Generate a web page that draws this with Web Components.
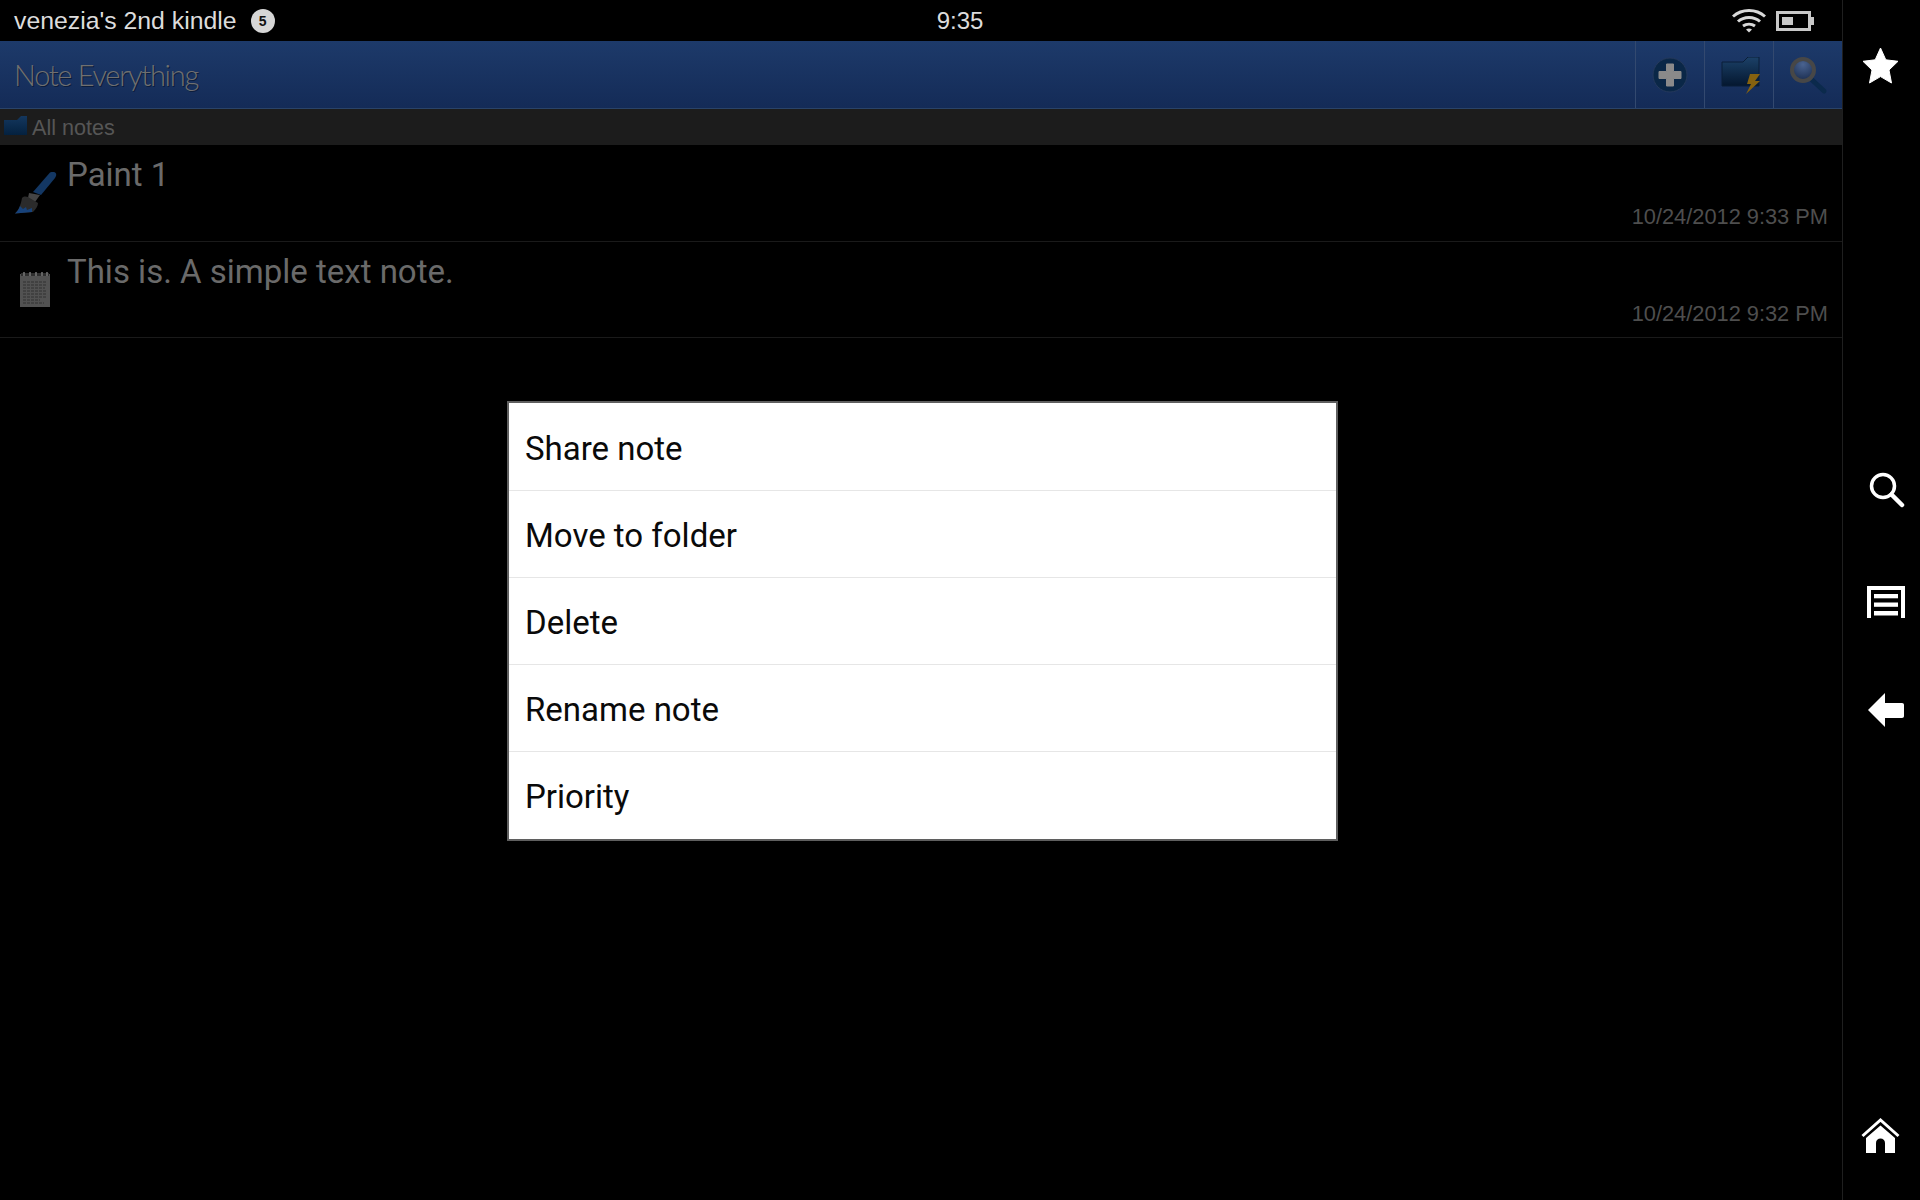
<!DOCTYPE html>
<html>
<head>
<meta charset="utf-8">
<title>Note Everything</title>
<style>
  html, body { margin: 0; height: 100%; background: #000; }
</style>
</head>
<body>
<app-shell>
  <status-bar slot="top" device="venezia's 2nd kindle" count="5" time="9:35"></status-bar>
  <action-bar slot="top" title="Note Everything"></action-bar>
  <folder-bar slot="top" name="All notes"></folder-bar>
  <note-row slot="top" kind="paint" title="Paint 1" date="10/24/2012 9:33 PM"></note-row>
  <note-row slot="top" kind="text" title="This is. A simple text note." date="10/24/2012 9:32 PM"></note-row>
  <context-menu slot="overlay">
    <menu-item>Share note</menu-item>
    <menu-item>Move to folder</menu-item>
    <menu-item>Delete</menu-item>
    <menu-item>Rename note</menu-item>
    <menu-item>Priority</menu-item>
  </context-menu>
  <nav-rail slot="rail"></nav-rail>
</app-shell>

<script>
// small helper, every element here just sets its shadow markup once
class Base extends HTMLElement {
  constructor() {
    super();
    this.attachShadow({ mode: 'open' });
  }
  render(html) {
    this.shadowRoot.innerHTML = html;
  }
}

class AppShell extends Base {
  connectedCallback() {
    this.render(`
      <style>
        :host { display: flex; width: 1920px; height: 1200px; background: #000; position: relative; overflow: hidden; }
        .main { flex: 1; min-width: 0; display: flex; flex-direction: column; position: relative; }
        .overlay { position: absolute; left: 507px; top: 401px; }
      </style>
      <div class="main"><slot name="top"></slot></div>
      <slot name="rail"></slot>
      <div class="overlay"><slot name="overlay"></slot></div>
    `);
  }
}

class StatusBar extends Base {
  connectedCallback() {
    this.render(`
      <style>
        :host { display: grid; grid-template-columns: 921px 78px 1fr; height: 41px; align-items: center; background: #000; color: #dcdcdc; font: 24.800px "Liberation Sans", Arial, sans-serif; }
        .left { display: flex; align-items: center; padding-left: 14px; gap: 14px; }
        .badge { width: 24px; height: 24px; border-radius: 50%; background: #d6d6d6; color: #111; font-size: 14px; font-weight: bold; display: flex; align-items: center; justify-content: center; }
        .time { text-align: center; font-size: 24px; }
        .right { display: flex; align-items: center; justify-content: flex-end; gap: 10px; padding-right: 28px; }
        svg { display: block; }
      </style>
      <div class="left"><span>${this.getAttribute('device')}</span><span class="badge">${this.getAttribute('count')}</span></div>
      <div class="time">${this.getAttribute('time')}</div>
      <div class="right">
        <svg width="34" height="25" viewBox="0 0 34 25" fill="none" stroke="#d8d8d8" stroke-width="3">
          <path d="M1 8.500C10 .5 24 .5 33 8.500"/>
          <path d="M6 13.500C12 8 22 8 28 13.500"/>
          <path d="M11 18C14.500 15.500 19.500 15.500 23 18"/>
          <path d="M14 21.500L17 24.500L20 21.500C18 20 16 20 14 21.500Z" fill="#d8d8d8" stroke="none"/>
        </svg>
        <svg width="38" height="20" viewBox="0 0 38 20">
          <path d="M0 0H35V6H38V14H35V20H0ZM3 3V17H32V3Z" fill="#c8c8c8" fill-rule="evenodd"/>
          <rect x="6" y="6" width="11" height="8" fill="#c8c8c8"/>
        </svg>
      </div>
    `);
  }
}

class ActionBar extends Base {
  connectedCallback() {
    this.render(`
      <style>
        :host { display: flex; height: 67px; background: linear-gradient(#1d3a6a, #142b57); border-bottom: 1px solid #2a4368; color: #707070; }
        .title { flex: 1; align-self: center; padding-left: 14px; font: 300 29px Lato, sans-serif; margin-top: -1px; letter-spacing: -1.300px; text-shadow: 1px 1px 0 #0c1d3c; }
        .btn { width: 68px; border-left: 1px solid #33496f; display: flex; align-items: center; justify-content: center; }
        svg { display: block; }
        .folder { margin-left: 5px; margin-top: 3px; }
        .mag { margin-left: 1px; margin-top: 2px; }
      </style>
      <div class="title">${this.getAttribute('title')}</div>
      <div class="btn">
        <svg width="36" height="36" viewBox="0 0 36 36">
          <circle cx="18" cy="18" r="17" fill="#0a2747" stroke="#25395c" stroke-width="1"/>
          <path d="M14.500 7H21.500V14.500H29V21.500H21.500V29H14.500V21.500H7V14.500H14.500Z" fill="#8a8a8a" stroke="#8a8a8a" stroke-linejoin="round"/>
        </svg>
      </div>
      <div class="btn">
        <svg class="folder" width="42" height="38" viewBox="0 0 42 38">
          <defs><linearGradient id="f" x1="0" y1="0" x2="0" y2="1"><stop offset="0" stop-color="#1c4168"/><stop offset="1" stop-color="#04172f"/></linearGradient></defs>
          <path d="M1 5H22L27 0H38V29H1Z" fill="url(#f)" stroke="#0a1e38"/>
          <path d="M29 17H39L34 24H39L25 37L30 27H26Z" fill="#85620f"/>
        </svg>
      </div>
      <div class="btn">
        <svg class="mag" width="38" height="38" viewBox="0 0 38 38">
          <defs><radialGradient id="g" cx=".5" cy=".25" r=".75"><stop offset="0" stop-color="#4a6390"/><stop offset="1" stop-color="#1a2d50"/></radialGradient></defs>
          <path d="M20 21L34 34" stroke="#0b2a4c" stroke-width="5" stroke-linecap="round"/>
          <circle cx="13" cy="13" r="11" fill="url(#g)" stroke="#474747" stroke-width="4"/>
        </svg>
      </div>
    `);
  }
}

class FolderBar extends Base {
  connectedCallback() {
    this.render(`
      <style>
        :host { display: flex; align-items: center; height: 36px; margin-bottom: 1px; background: #1c1c1c; color: #565656; font: 21.600px "Liberation Sans", Arial, sans-serif; padding-left: 4px; gap: 4px; }
        span { position: relative; top: 1px; }
        svg { display: block; margin-top: -2px; }
      </style>
      <svg width="24" height="20" viewBox="0 0 24 20">
        <defs><linearGradient id="b" x1="0" y1="0" x2="0" y2="1"><stop offset="0" stop-color="#14375e"/><stop offset="1" stop-color="#04213f"/></linearGradient></defs>
        <path d="M0 4H13L17 0H23V19H0Z" fill="url(#b)"/>
      </svg>
      <span>${this.getAttribute('name')}</span>
    `);
  }
}

const noteIcons = {
  paint: `<svg width="44" height="46" viewBox="0 0 44 46">
      <path d="M37 .5C39 -.5 42 -.5 43 1.500C43.500 3 43 4 42 6L28 23L20 20Z" fill="#133763"/>
      <path d="M16 21L27 23L22 30L15 26Z" fill="#454545"/>
      <path d="M9 26C11 24 13 24.500 15 25L25 31C25 34 23 37 20 40L2 41.500C6 38 8 32 9 26Z" fill="#2b2b2b"/>
      <path d="M7 34L10 37L13 35L14 38L19 36L19 40L2 41.500C4 39.500 6 37 7 34Z" fill="#17427a"/>
    </svg>`,
  text: `<svg width="30" height="36" viewBox="0 0 30 36">
      <rect x="0" y="2" width="30" height="33" fill="#525252"/>
      <path d="M1 1H29V4H1Z" fill="#2e2e2e"/>
      <path d="M3 10H27M3 13H27M3 16H25M3 19H27M3 22H26M3 25H27M3 28H20M3 31H24" stroke="#2a2a2a" stroke-width=".8" stroke-dasharray="3 1"/>
      <path d="M4 0V4M10 0V4M16 0V4M22 0V4M27 0V4" stroke="#777" stroke-width="1.500"/>
    </svg>`
};

class NoteRow extends Base {
  connectedCallback() {
    this.render(`
      <style>
        :host { display: grid; grid-template-columns: 67px 1fr; height: 96px; box-sizing: border-box; border-bottom: 1px solid #1a1a1a; position: relative; font-family: Roboto, sans-serif; }
        :host([kind="text"]) .icon { padding-top: 30px; }
        :host([kind="text"]) .body { padding-top: 7px; padding-bottom: 10px; }
        .icon { display: flex; justify-content: center; align-items: flex-start; padding: 26px 0 0 3px; }
        .body { display: flex; flex-direction: column; justify-content: space-between; padding: 6px 14px 11px 0; }
        .title { font-size: 33px; line-height: 46px; color: #6a6a6a; }
        .date { font: 21.800px "Liberation Sans", Arial, sans-serif; line-height: 26px; color: #4e4e4e; text-align: right; }
      </style>
      <div class="icon">${noteIcons[this.getAttribute('kind')]}</div>
      <div class="body">
        <div class="title">${this.getAttribute('title')}</div>
        <div class="date">${this.getAttribute('date')}</div>
      </div>
    `);
  }
}

class ContextMenu extends Base {
  connectedCallback() {
    this.render(`
      <style>
        :host { display: flex; flex-direction: column; width: 831px; box-sizing: border-box; background: #fff; border: 2px solid #5f5f5f; padding-top: 1px; }
      </style>
      <slot></slot>
    `);
  }
}

class MenuItem extends Base {
  connectedCallback() {
    this.render(`
      <style>
        :host { display: flex; align-items: center; height: 87px; box-sizing: border-box; padding: 2px 0 0 16px; font: 33px Roboto, sans-serif; color: #0a0a0a; border-bottom: 1px solid #e6e6e6; }
        :host(:last-child) { border-bottom: 0; }
      </style>
      <slot></slot>
    `);
  }
}

class NavRail extends Base {
  connectedCallback() {
    this.render(`
      <style>
        :host { display: flex; flex-direction: column; width: 78px; box-sizing: border-box; height: 1200px; background: #000; border-left: 1px solid #1f1f1f; align-items: center; padding: 47px 0; }
        svg { display: block; flex: none; }
        .star { margin-left: -3px; }
        .search { margin-top: 388px; margin-left: 10px; }
        .list { margin-top: 78px; margin-left: 8px; }
        .back { margin-top: 75px; margin-left: 8px; }
        .home { margin-top: auto; margin-left: -3px; }
      </style>
      <svg class="star" width="37" height="37" viewBox="0 0 37 37">
        <path d="M18.500 1L23.800 12.800L36 14.300L27 23L29.500 36L18.500 29.600L7.500 36L10 23L1 14.300L13.200 12.800Z" fill="#fff" stroke="#fff" stroke-linejoin="round"/>
      </svg>
      <svg class="search" width="36" height="36" viewBox="0 0 36 36" fill="none" stroke="#fff" stroke-width="3.500">
        <circle cx="14" cy="14" r="11.500"/>
        <path d="M22.500 22.500L33 33" stroke-width="4.500" stroke-linecap="round"/>
      </svg>
      <svg class="list" width="38" height="32" viewBox="0 0 38 32" fill="#fff">
        <path d="M0 32V0H38V32H34V4H4V32Z"/>
        <rect x="7" y="8" width="24" height="4.300"/>
        <rect x="7" y="16.500" width="24" height="4.300"/>
        <rect x="7" y="25" width="24" height="4.500"/>
      </svg>
      <svg class="back" width="36" height="34" viewBox="0 0 36 34" fill="#fff">
        <path d="M17 0V10H34C35.300 10 36 10.700 36 12V23C36 24.300 35.300 25 34 25H17V34L0 17Z"/>
      </svg>
      <svg class="home" width="39" height="35" viewBox="0 0 39 35">
        <path d="M1.500 18L19.500 2L37.500 18" fill="none" stroke="#fff" stroke-width="3"/>
        <path d="M5 20L19.500 7.500L34 20V35H24V25C24 22 22 20.500 19.500 20.500C17 20.500 15 22 15 25V35H5Z" fill="#fff"/>
      </svg>
    `);
  }
}

customElements.define('app-shell', AppShell);
customElements.define('status-bar', StatusBar);
customElements.define('action-bar', ActionBar);
customElements.define('folder-bar', FolderBar);
customElements.define('note-row', NoteRow);
customElements.define('context-menu', ContextMenu);
customElements.define('menu-item', MenuItem);
customElements.define('nav-rail', NavRail);
</script>
</body>
</html>
